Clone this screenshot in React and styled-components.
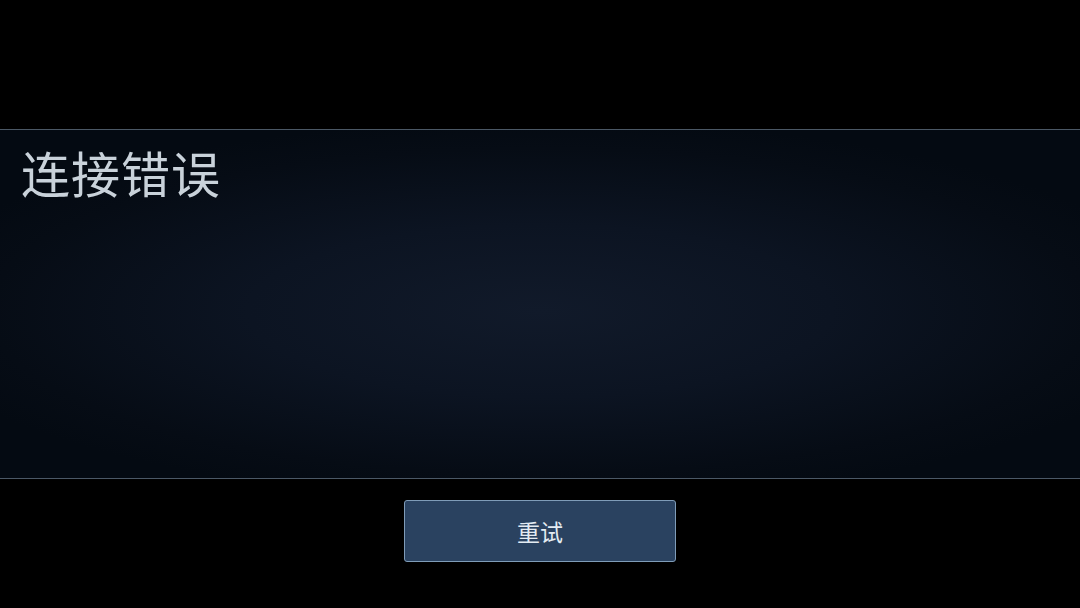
import React from 'react';
import styled, { createGlobalStyle } from 'styled-components';

const GlobalStyle = createGlobalStyle`
  html, body {
    margin: 0;
    padding: 0;
    background: #000;
    font-family: "Noto Sans CJK SC", "Noto Sans", sans-serif;
  }
`;

const Screen = styled.div`
  width: 1080px;
  height: 608px;
  background: #000;
  display: flex;
  flex-direction: column;
  align-items: center;
  padding-top: 129px;
  box-sizing: border-box;
  overflow: hidden;
`;

const Panel = styled.div`
  width: 100%;
  height: 350px;
  box-sizing: border-box;
  border-top: 1px solid #4b5866;
  border-bottom: 1px solid #4b5866;
  background: radial-gradient(ellipse 60% 55% at 50% 52%, #111a2a 0%, #0c1422 45%, #060c15 85%, #040a12 100%);
  padding: 10px 21px;
`;

const Title = styled.h1`
  margin: 0;
  font-size: 49px;
  font-weight: 400;
  line-height: 64px;
  color: #c9d2da;
  letter-spacing: 1px;
`;

const RetryButton = styled.button`
  margin-top: 21px;
  width: 272px;
  height: 62px;
  background: #2a4260;
  border: 1px solid #7f9cb8;
  border-radius: 3px;
  color: #e3ebf2;
  font-family: "Noto Sans CJK SC", "Noto Sans", sans-serif;
  font-size: 23px;
  cursor: pointer;
`;

export default function App() {
  return (
    <>
      <GlobalStyle />
      <Screen>
        <Panel>
          <Title>连接错误</Title>
        </Panel>
        <RetryButton>重试</RetryButton>
      </Screen>
    </>
  );
}
